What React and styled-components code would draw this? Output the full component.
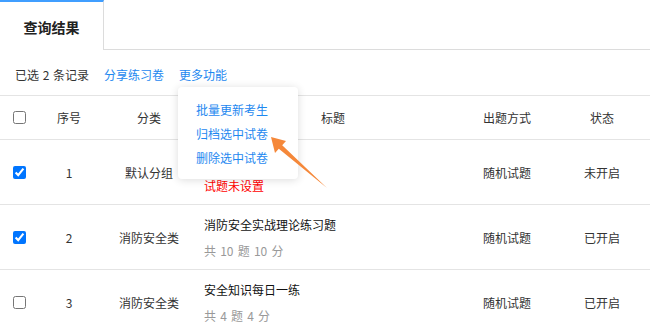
import React from "react";
import styled, { createGlobalStyle } from "styled-components";

const GlobalStyle = createGlobalStyle`
  body {
    margin: 0;
    background: #fff;
    overflow: hidden;
    font-family: "Noto Sans CJK SC", "Noto Sans", sans-serif;
    font-size: 12px;
    color: #333;
  }
`;

const rows = [
  { id: 1, checked: true, category: "默认分组", title: "", sub: "试题未设置", warn: true, mode: "随机试题", status: "未开启" },
  { id: 2, checked: true, category: "消防安全类", title: "消防安全实战理论练习题", sub: "共 10 题 10 分", mode: "随机试题", status: "已开启" },
  { id: 3, checked: false, category: "消防安全类", title: "安全知识每日一练", sub: "共 4 题 4 分", mode: "随机试题", status: "已开启" },
];

const menuItems = ["批量更新考生", "归档选中试卷", "删除选中试卷"];

function App() {
  return (
    <Page>
      <GlobalStyle />
      <TabBar>
        <Tab>查询结果</Tab>
        <TabFiller />
      </TabBar>
      <Toolbar>
        <Count>已选 2 条记录</Count>
        <Link>分享练习卷</Link>
        <MoreTrigger>
          <Link>更多功能</Link>
          <Menu>
            {menuItems.map((m) => (
              <MenuItem key={m}>{m}</MenuItem>
            ))}
          </Menu>
        </MoreTrigger>
      </Toolbar>
      <Table>
        <HeadRow>
          <Cell>
            <Check type="checkbox" readOnly />
          </Cell>
          <Cell>序号</Cell>
          <Cell>分类</Cell>
          <Cell>标题</Cell>
          <Cell>出题方式</Cell>
          <Cell $pad>状态</Cell>
        </HeadRow>
        {rows.map((r) => (
          <Row key={r.id}>
            <Cell>
              <Check type="checkbox" checked={r.checked} readOnly />
            </Cell>
            <Cell>{r.id}</Cell>
            <Cell>{r.category}</Cell>
            <TitleCell>
              <TitleText>{r.title || "\u00a0"}</TitleText>
              <SubText $warn={r.warn}>{r.sub}</SubText>
            </TitleCell>
            <Cell>{r.mode}</Cell>
            <Cell $pad>{r.status}</Cell>
          </Row>
        ))}
      </Table>
      <Pointer viewBox="0 0 70 65" width="70" height="65">
        <polygon
          points="6,7 21,11 17.2,15.2 62,58 13.8,18.8 10,23"
          fill="#f5883a"
        />
      </Pointer>
    </Page>
  );
}

export default App;

const Page = styled.div`
  position: relative;
  width: 650px;
  height: 334px;
  overflow: hidden;
`;

const TabBar = styled.div`
  display: flex;
  height: 50px;
`;

const Tab = styled.div`
  width: 104px;
  border-top: 2px solid #409eff;
  border-right: 1px solid #dcdcdc;
  display: flex;
  align-items: center;
  justify-content: center;
  font-size: 14px;
  font-weight: 700;
  color: #222;
  padding-top: 1px;
  box-sizing: border-box;
`;

const TabFiller = styled.div`
  flex: 1;
  border-bottom: 1px solid #dcdcdc;
`;

const Toolbar = styled.div`
  height: 45px;
  box-sizing: border-box;
  padding: 4px 0 0 15px;
  display: flex;
  align-items: center;
  gap: 15px;
  color: #333;
`;

const Count = styled.span`
  word-spacing: 1px;
`;

const Link = styled.span`
  color: #1e88f0;
  cursor: pointer;
`;

const MoreTrigger = styled.span`
  position: relative;
  line-height: 20px;
`;

const Menu = styled.div`
  position: absolute;
  left: -1px;
  top: 22px;
  width: 120px;
  padding: 11px 0 9px 18px;
  box-sizing: border-box;
  background: #fff;
  border-radius: 4px;
  box-shadow: 0 1px 8px rgba(0, 0, 0, 0.14);
  z-index: 5;
`;

const MenuItem = styled.div`
  line-height: 24px;
  color: #1e88f0;
  white-space: nowrap;
  cursor: pointer;
`;

const Table = styled.div`
  border-top: 1px solid #e4e4e4;
`;

const grid = `
  display: grid;
  grid-template-columns: 38px 62px 98px 270px 78px 104px;
  border-bottom: 1px solid #e4e4e4;
  align-items: center;
`;

const HeadRow = styled.div`
  ${grid}
  height: 44px;
  box-sizing: border-box;
  color: #333;
`;

const Row = styled.div`
  ${grid}
  height: 65px;
  box-sizing: border-box;
`;

const Cell = styled.div`
  display: flex;
  justify-content: center;
  align-items: center;
  padding-left: ${(p) => (p.$pad ? "8px" : "0")};
  color: #333;
`;

const TitleCell = styled.div`
  padding-left: 6px;
  display: flex;
  flex-direction: column;
`;

const TitleText = styled.div`
  line-height: 20px;
  color: #111;
  padding-top: 1px;
`;

const SubText = styled.div`
  margin-top: 6px;
  line-height: 20px;
  word-spacing: 1.5px;
  color: ${(p) => (p.$warn ? "#f00" : "#999")};
`;

const Check = styled.input`
  margin: 0;
  width: 13px;
  height: 13px;
`;

const Pointer = styled.svg`
  position: absolute;
  left: 265px;
  top: 130px;
  pointer-events: none;
  z-index: 6;
`;
